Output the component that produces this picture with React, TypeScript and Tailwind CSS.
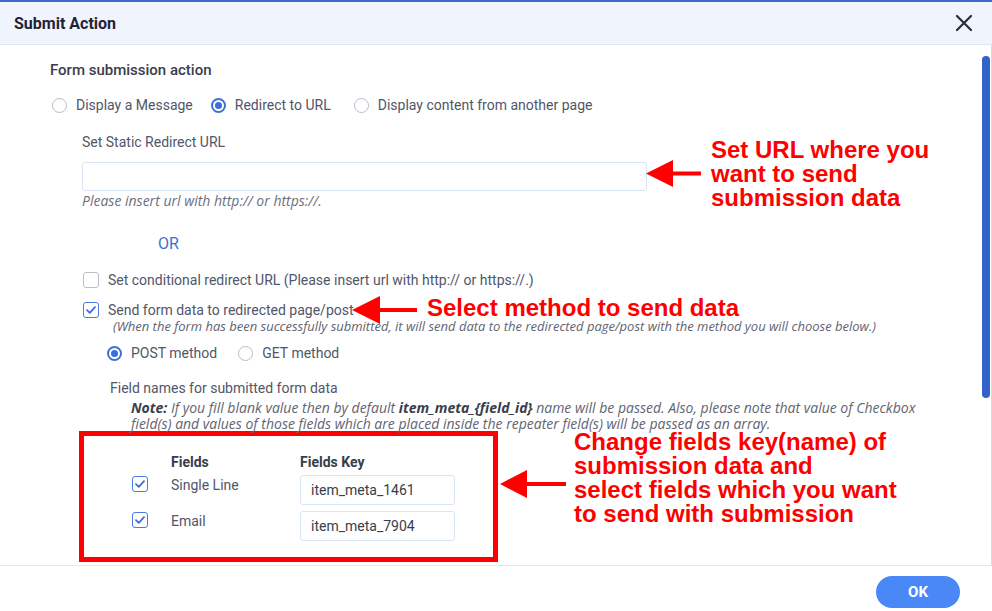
import React from "react";

const Radio: React.FC<{ checked?: boolean }> = ({ checked }) =>
  checked ? (
    <span className="flex h-[15px] w-[15px] shrink-0 items-center justify-center rounded-full border-2 border-[#3d6fd9] bg-white">
      <span className="h-[7px] w-[7px] rounded-full bg-[#3d6fd9]" />
    </span>
  ) : (
    <span className="block h-[15px] w-[15px] shrink-0 rounded-full border-[1.5px] border-[#b7bdca] bg-white" />
  );

const Check: React.FC<{ checked?: boolean }> = ({ checked }) =>
  checked ? (
    <span className="flex h-[16px] w-[16px] shrink-0 items-center justify-center rounded-[3px] border-[1.5px] border-[#4a7be0] bg-white">
      <svg width="10" height="8" viewBox="0 0 10 8" fill="none">
        <path d="M1 4.2 L3.8 6.8 L9 1.2" stroke="#3d6fd9" strokeWidth="1.8" strokeLinecap="round" strokeLinejoin="round" />
      </svg>
    </span>
  ) : (
    <span className="block h-[16px] w-[16px] shrink-0 rounded-[3px] border-[1.5px] border-[#b9bfcb] bg-white" />
  );

const Arrow: React.FC<{ len: number; head: number; h: number }> = ({ len, head, h }) => (
  <svg width={len} height={h} viewBox={`0 0 ${len} ${h}`}>
    <polygon points={`0,${h / 2} ${head},0 ${head},${h}`} fill="#ff0000" />
    <rect x={head - 1} y={h / 2 - 2} width={len - head + 1} height="4" fill="#ff0000" />
  </svg>
);

const App: React.FC = () => {
  return (
    <div className="relative flex h-[611px] w-[992px] flex-col overflow-hidden bg-white font-['Roboto',sans-serif] text-[14px] text-[#51566a]">
      <div className="h-[2px] bg-[#3c6dcc]" />
      <header className="flex h-[43px] shrink-0 items-center justify-between border-b border-[#dfe6f4] bg-[#eff4fd] pl-[14px] pr-[19px]">
        <h1 className="pt-[1px] text-[16px] font-bold text-[#1f2336]">Submit Action</h1>
        <svg width="18" height="18" viewBox="0 0 18 18">
          <path d="M2 2 L16 16 M16 2 L2 16" stroke="#2a2d3a" strokeWidth="2.2" strokeLinecap="round" />
        </svg>
      </header>

      <div className="relative flex-1 overflow-hidden">
        <div className="pl-[50px] pt-[15px]">
          <div className="text-[15px] leading-[20px] font-medium text-[#3a3d4a]">Form submission action</div>

          <div className="mt-[15px] flex h-[20px] items-center pl-[2px]">
            <Radio />
            <span className="ml-[9px]">Display a Message</span>
            <span className="ml-[18px] flex"><Radio checked /></span>
            <span className="ml-[9px]">Redirect to URL</span>
            <span className="ml-[23px] flex"><Radio /></span>
            <span className="ml-[9px]">Display content from another page</span>
          </div>

          <div className="pl-[32px]">
            <div className="mt-[17px] leading-[20px]">Set Static Redirect URL</div>
            <div className="mt-[10px] h-[29px] w-[565px] rounded-[3px] border border-[#d9e4f6] bg-white" />
            <div className="mt-[1px] font-['Open_Sans',sans-serif] text-[14px] leading-[18px] italic text-[#6b6f7c]">Please insert url with http:// or https://.</div>
            <div className="mt-[24px] pl-[76px] text-[16px] leading-[20px] text-[#3d6fd9]">OR</div>

            <div className="mt-[16px] flex h-[20px] items-center pl-[1px]">
              <Check />
              <span className="ml-[9px]">Set conditional redirect URL (Please insert url with http:// or https://.)</span>
            </div>
            <div className="mt-[11px] flex h-[18px] items-center pl-[1px]">
              <Check checked />
              <span className="ml-[9px]">Send form data to redirected page/post</span>
            </div>
            <div className="whitespace-nowrap pl-[31px] font-['Open_Sans',sans-serif] text-[13px] leading-[14px] italic text-[#5f6472]">
              (When the form has been successfully submitted, it will send data to the redirected page/post with the method you will choose below.)
            </div>

            <div className="mt-[10px] flex h-[20px] items-center pl-[25px]">
              <Radio checked />
              <span className="ml-[9px]">POST method</span>
              <span className="ml-[21px] flex"><Radio /></span>
              <span className="ml-[9px]">GET method</span>
            </div>

            <div className="mt-[15px] pl-[28px] leading-[20px]">Field names for submitted form data</div>
            <div className="mt-[2px] whitespace-nowrap pl-[49px] font-['Open_Sans',sans-serif] text-[14px] leading-[16px] italic text-[#5f6472]">
              <div>
                <b className="text-[#3a3d4a]">Note:</b> If you fill blank value then by default <b className="text-[#3a3d4a]">item_meta_{"{field_id}"}</b> name will be passed. Also, please note that value of Checkbox
              </div>
              <div>field(s) and values of those fields which are placed inside the repeater field(s) will be passed as an array.</div>
            </div>

            <div className="ml-[-3px] mt-[-1px] w-[419px] border-[5px] border-[#ff0000] pb-[16px] pl-[48px] pt-[16px]">
              <div className="flex h-[20px] items-center font-bold text-[#3a3d4a]">
                <span className="ml-[39px] w-[129px]">Fields</span>
                <span>Fields Key</span>
              </div>
              <div className="mt-[3px] flex h-[30px] items-start">
                <span className="mt-[1px] flex"><Check checked /></span>
                <span className="ml-[23px] w-[129px] leading-[20px]">Single Line</span>
                <div className="flex h-[30px] w-[155px] items-center rounded-[3px] border border-[#d9e4f6] pl-[10px] text-[#3a3d4a]">item_meta_1461</div>
              </div>
              <div className="mt-[6px] flex h-[30px] items-start">
                <span className="mt-[1px] flex"><Check checked /></span>
                <span className="ml-[23px] w-[129px] leading-[20px]">Email</span>
                <div className="flex h-[30px] w-[155px] items-center rounded-[3px] border border-[#d9e4f6] pl-[10px] text-[#3a3d4a]">item_meta_7904</div>
              </div>
            </div>
          </div>
        </div>

        <div className="absolute right-[2px] top-[11px] h-[342px] w-[8px] rounded-full bg-[#3062c8]" />
        <div className="absolute right-0 top-0 h-full w-[1px] bg-[#d6dbe4]" />
      </div>

      <footer className="flex h-[46px] shrink-0 items-start justify-end border-t border-[#dfe6f4] pr-[32px] pt-[10px]">
        <button className="h-[32px] w-[84px] rounded-full bg-[#4a88f7] text-[15px] font-bold text-white">OK</button>
      </footer>

      {/* annotations */}
      <div className="absolute left-[646px] top-[160px] flex items-center">
        <Arrow len={55} head={27} h={27} />
      </div>
      <div className="absolute left-[711px] top-[138px] font-['Liberation_Sans',Arial,sans-serif] text-[24px] leading-[24px] font-bold text-[#ff0000]">
        Set URL where you<br />want to send<br />submission data
      </div>

      <div className="absolute left-[352px] top-[296px]">
        <Arrow len={65} head={28} h={28} />
      </div>
      <div className="absolute left-[427px] top-[296px] font-['Liberation_Sans',Arial,sans-serif] text-[24px] leading-[24px] font-bold text-[#ff0000]">
        Select method to send data
      </div>

      <div className="absolute left-[500px] top-[470px]">
        <Arrow len={66} head={27} h={28} />
      </div>
      <div className="absolute left-[574px] top-[430px] font-['Liberation_Sans',Arial,sans-serif] text-[24px] leading-[24px] font-bold text-[#ff0000]">
        Change fields key(name) of<br />submission data and<br />select fields which you want<br />to send with submission
      </div>
    </div>
  );
};

export default App;
